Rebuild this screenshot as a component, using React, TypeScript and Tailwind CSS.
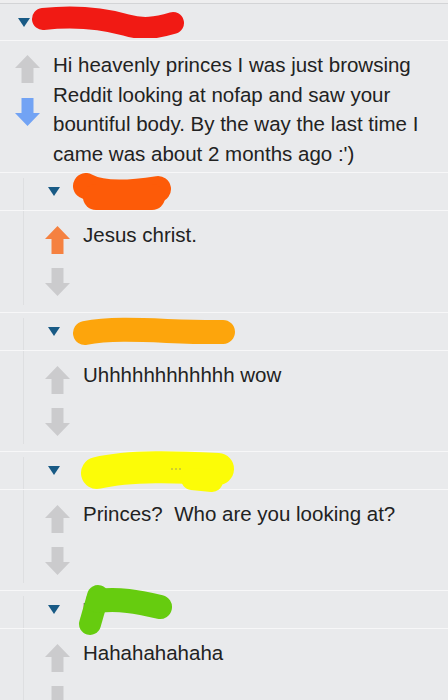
import React from "react";

const GRAY = "#cbcbcd";

function Up({ color = GRAY }: { color?: string }) {
  return (
    <svg width="25" height="28" viewBox="0 0 25 28" className="block">
      <path d="M12.5 0 L25 13 L18.5 13 L18.5 28 L6.5 28 L6.5 13 L0 13 Z" fill={color} />
    </svg>
  );
}

function Down({ color = GRAY }: { color?: string }) {
  return (
    <svg width="25" height="28" viewBox="0 0 25 28" className="block">
      <path d="M6.5 0 L18.5 0 L18.5 15 L25 15 L12.5 28 L0 15 L6.5 15 Z" fill={color} />
    </svg>
  );
}

function Tri() {
  return (
    <svg width="12" height="9" viewBox="0 0 12 9" className="block shrink-0">
      <polygon points="0,0 12,0 6,9" fill="#185a85" />
    </svg>
  );
}

function Sep() {
  return <div className="h-px bg-[#f7f7f8]" />;
}

function VLine({ top = false }: { top?: boolean }) {
  return (
    <>
      <div className="w-[23px] shrink-0" />
      <div className={top ? "w-px shrink-0 bg-[#dedfe1] mt-[5px]" : "w-px shrink-0 bg-[#dedfe1] mb-[7px]"} />
    </>
  );
}

function NestedHeader({ children }: { children: React.ReactNode }) {
  return (
    <div className="flex h-[37px]">
      <VLine top />
      <div className="flex items-center pl-[24px]">
        <Tri />
        {children}
      </div>
    </div>
  );
}

function NestedBody({
  text,
  up = GRAY,
  h = "h-[100px]",
}: {
  text: string;
  up?: string;
  h?: string;
}) {
  return (
    <div className={`flex ${h}`}>
      <VLine />
      <div className="flex flex-col gap-[14px] pl-[21px] pt-[15px] shrink-0">
        <Up color={up} />
        <Down />
      </div>
      <div className="ml-[13px] pt-[9px] text-[20.5px] leading-[29.5px] text-[#222] whitespace-pre">
        {text}
      </div>
    </div>
  );
}

export default function App() {
  return (
    <div className="w-[448px] h-[700px] overflow-hidden bg-[#e9eaec] font-['Liberation_Sans',Arial,sans-serif]">
      <div className="h-[3px] bg-[#eeeeef]" />
      <div className="h-px bg-[#d3d4d6]" />
      {/* top header */}
      <div className="flex h-[36px] items-center pl-[18px]">
        <Tri />
        <svg width="155" height="32" viewBox="0 0 155 32" className="relative z-10 ml-px shrink-0">
          <path
            d="M12 13 C40 10 70 12 95 19 C112 24 125 22 142 17"
            stroke="#f11a14"
            strokeWidth="22"
            strokeLinecap="round"
            fill="none"
          />
        </svg>
      </div>
      <Sep />
      {/* top body */}
      <div className="flex">
        <div className="flex flex-col gap-[15px] pl-[15px] pt-[14px] shrink-0">
          <Up />
          <Down color="#72a3f4" />
        </div>
        <div className="ml-[13px] pt-[9px] pb-[4px] text-[20.5px] leading-[29.5px] text-[#222] whitespace-nowrap">
          Hi heavenly princes I was just browsing
          <br />
          Reddit looking at nofap and saw your
          <br />
          bountiful body. By the way the last time I
          <br />
          came was about 2 months ago :')
        </div>
      </div>

      {/* comment 2 */}
      <Sep />
      <NestedHeader>
        <svg width="102" height="38" viewBox="0 0 102 38" className="relative z-10 ml-[12px] shrink-0">
          <path d="M14 13 C30 22 60 20 86 16" stroke="#fd5b08" strokeWidth="26" strokeLinecap="round" fill="none" />
          <path d="M24 24 L80 24" stroke="#fd5b08" strokeWidth="26" strokeLinecap="round" fill="none" />
        </svg>
      </NestedHeader>
      <Sep />
      <NestedBody text="Jesus christ." up="#f58140" h="h-[101px]" />

      {/* comment 3 */}
      <Sep />
      <NestedHeader>
        <svg width="165" height="32" viewBox="0 0 165 32" className="relative z-10 ml-[12px] shrink-0">
          <path d="M13 17 C50 10 100 17 151 16" stroke="#fda50c" strokeWidth="24" strokeLinecap="round" fill="none" />
        </svg>
      </NestedHeader>
      <Sep />
      <NestedBody text="Uhhhhhhhhhhhh wow" />

      {/* comment 4 */}
      <Sep />
      <NestedHeader>
        <svg width="157" height="44" viewBox="0 0 157 44" className="relative z-10 ml-[20px] shrink-0">
          <path d="M17 24 C50 16 100 18 138 20" stroke="#fcfc07" strokeWidth="32" strokeLinecap="round" fill="none" />
          <path d="M112 30 L132 32" stroke="#fcfc07" strokeWidth="22" strokeLinecap="round" fill="none" />
          <circle cx="92" cy="20" r="0.8" fill="#9a9a60" />
          <circle cx="96" cy="20" r="0.8" fill="#9a9a60" />
          <circle cx="100" cy="20" r="0.8" fill="#9a9a60" />
        </svg>
      </NestedHeader>
      <Sep />
      <NestedBody text="Princes?  Who are you looking at?" />

      {/* comment 5 */}
      <Sep />
      <NestedHeader>
        <span className="ml-[22px] text-[20px] text-[#2b6ca3]">P</span>
        <svg width="95" height="52" viewBox="0 0 95 52" className="relative z-10 -ml-[17px] shrink-0">
          <path d="M20 12 L12 40" stroke="#66cc0f" strokeWidth="22" strokeLinecap="round" fill="none" />
          <path d="M20 17 C40 14 60 18 82 23" stroke="#66cc0f" strokeWidth="24" strokeLinecap="round" fill="none" />
        </svg>
      </NestedHeader>
      <Sep />
      <NestedBody text="Hahahahahaha" />
    </div>
  );
}
